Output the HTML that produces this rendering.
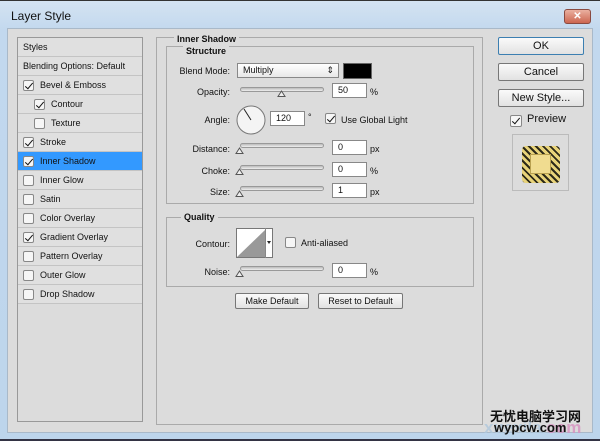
<!DOCTYPE html>
<html><head><meta charset="utf-8"><style>
*{margin:0;padding:0;box-sizing:border-box}
body{width:600px;height:441px;overflow:hidden;font-family:"Liberation Sans",Tahoma,sans-serif;font-size:9px;color:#111;position:relative;background:#bcd5ec}
.a{position:absolute}
.frame{left:0;top:0;width:600px;height:441px;background:linear-gradient(#d4e3f2,#c2d8ee 30px,#bdd5ec);border-top:1px solid #333;border-bottom:2px solid #334}
.content{left:7px;top:28px;width:586px;height:405px;background:#dcdcdc;border:1px solid #a9b9c9}
.title{left:11px;top:9px;font-size:12px;color:#111}
.close{left:564px;top:9px;width:27px;height:15px;background:linear-gradient(#eab0a0,#cc6650);border:1px solid #8a4a40;border-radius:3px;color:#fff;font-size:10px;text-align:center;line-height:13px;font-weight:bold}
.lp{left:17px;top:37px;width:126px;height:385px;border:1px solid #999;background:#dcdcdc}
.row{position:absolute;left:0;width:124px;height:19px;border-bottom:1px solid #c4c4c4;background:#e0e0e0;line-height:18px;padding-left:5px}
.sel{background:#3399ff;color:#111}
.cb{position:absolute;width:11px;height:11px;border:1px solid #888;background:#f6f6f6;border-radius:2px;top:4px}
.cb.c::after{content:"";position:absolute;left:3px;top:0px;width:3px;height:7px;border-right:1.5px solid #111;border-bottom:1.5px solid #111;transform:rotate(40deg)}
.lbl{position:absolute;top:0}
.mp{left:156px;top:37px;width:327px;height:388px;border:1px solid #aaa}
.grp{border:1px solid #aaa;position:absolute}
.gt{position:absolute;background:#dcdcdc;font-weight:bold;padding:0 3px;font-size:9px}
.inp{position:absolute;background:#fff;border:1px solid #888;height:15px;line-height:13px;padding-left:5px}
.sl{position:absolute;height:5px;border:1px solid #999;border-radius:3px;background:linear-gradient(#bbb,#eee)}
.th{position:absolute;width:9px;height:7px;}
.r{position:absolute;text-align:right}
.btn{position:absolute;border:1px solid #777;border-radius:2px;background:linear-gradient(#fafafa,#e2e2e2);text-align:center}
</style></head><body>
<div class="a frame"></div>
<div class="a title">Layer Style</div>
<div class="a close">✕</div>
<div class="a content"></div>

<div class="a lp">
<div class="row" style="top:0">Styles</div>
<div class="row" style="top:19px">Blending Options: Default</div>
<div class="row" style="top:38px"><span class="cb c" style="left:5px"></span><span class="lbl" style="left:22px">Bevel &amp; Emboss</span></div>
<div class="row" style="top:57px"><span class="cb c" style="left:16px"></span><span class="lbl" style="left:33px">Contour</span></div>
<div class="row" style="top:76px"><span class="cb" style="left:16px"></span><span class="lbl" style="left:33px">Texture</span></div>
<div class="row" style="top:95px"><span class="cb c" style="left:5px"></span><span class="lbl" style="left:22px">Stroke</span></div>
<div class="row sel" style="top:114px"><span class="cb c" style="left:5px"></span><span class="lbl" style="left:22px">Inner Shadow</span></div>
<div class="row" style="top:133px"><span class="cb" style="left:5px"></span><span class="lbl" style="left:22px">Inner Glow</span></div>
<div class="row" style="top:152px"><span class="cb" style="left:5px"></span><span class="lbl" style="left:22px">Satin</span></div>
<div class="row" style="top:171px"><span class="cb" style="left:5px"></span><span class="lbl" style="left:22px">Color Overlay</span></div>
<div class="row" style="top:190px"><span class="cb c" style="left:5px"></span><span class="lbl" style="left:22px">Gradient Overlay</span></div>
<div class="row" style="top:209px"><span class="cb" style="left:5px"></span><span class="lbl" style="left:22px">Pattern Overlay</span></div>
<div class="row" style="top:228px"><span class="cb" style="left:5px"></span><span class="lbl" style="left:22px">Outer Glow</span></div>
<div class="row" style="top:247px"><span class="cb" style="left:5px"></span><span class="lbl" style="left:22px">Drop Shadow</span></div>
</div>

<div class="a mp"></div>
<div class="grp" style="left:166px;top:46px;width:308px;height:158px"></div>
<div class="gt" style="left:174px;top:34px">Inner Shadow</div>
<div class="gt" style="left:183px;top:46px">Structure</div>
<div class="r" style="left:170px;width:60px;top:66px">Blend Mode:</div>
<div class="inp" style="left:237px;top:63px;width:102px;background:linear-gradient(#fff,#e8e8e8)">Multiply<span style="position:absolute;right:4px;top:0">⇕</span></div>
<div class="a" style="left:343px;top:63px;width:29px;height:16px;background:#000;border:1px solid #666"></div>

<div class="r" style="left:170px;width:60px;top:87px">Opacity:</div>
<div class="sl" style="left:240px;top:87px;width:84px"></div>
<svg class="th" style="left:277px;top:90px" viewBox="0 0 9 7"><path d="M1 6.5L4.5 1 8 6.5Z" fill="#eee" stroke="#555"/></svg>
<div class="inp" style="left:332px;top:83px;width:35px">50</div><div class="a" style="left:370px;top:87px">%</div>

<div class="r" style="left:170px;width:60px;top:115px">Angle:</div>
<svg class="a" style="left:236px;top:105px" width="30" height="30"><circle cx="15" cy="15" r="14" fill="#f4f4f4" stroke="#777"/><line x1="15" y1="15" x2="8" y2="4" stroke="#222"/></svg>
<div class="inp" style="left:270px;top:111px;width:35px">120</div><div class="a" style="left:308px;top:112px">°</div>
<span class="cb c" style="left:325px;top:113px"></span><div class="a" style="left:341px;top:115px">Use Global Light</div>

<div class="r" style="left:170px;width:60px;top:144px">Distance:</div>
<div class="sl" style="left:240px;top:143px;width:84px"></div>
<svg class="th" style="left:235px;top:147px" viewBox="0 0 9 7"><path d="M1 6.5L4.5 1 8 6.5Z" fill="#eee" stroke="#555"/></svg>
<div class="inp" style="left:332px;top:140px;width:35px">0</div><div class="a" style="left:370px;top:144px">px</div>

<div class="r" style="left:170px;width:60px;top:166px">Choke:</div>
<div class="sl" style="left:240px;top:165px;width:84px"></div>
<svg class="th" style="left:235px;top:168px" viewBox="0 0 9 7"><path d="M1 6.5L4.5 1 8 6.5Z" fill="#eee" stroke="#555"/></svg>
<div class="inp" style="left:332px;top:162px;width:35px">0</div><div class="a" style="left:370px;top:166px">%</div>

<div class="r" style="left:170px;width:60px;top:187px">Size:</div>
<div class="sl" style="left:240px;top:186px;width:84px"></div>
<svg class="th" style="left:235px;top:190px" viewBox="0 0 9 7"><path d="M1 6.5L4.5 1 8 6.5Z" fill="#eee" stroke="#555"/></svg>
<div class="inp" style="left:332px;top:183px;width:35px">1</div><div class="a" style="left:370px;top:187px">px</div>

<div class="grp" style="left:166px;top:217px;width:308px;height:70px"></div>
<div class="gt" style="left:181px;top:212px">Quality</div>
<div class="r" style="left:170px;width:60px;top:239px">Contour:</div>
<svg class="a" style="left:236px;top:228px" width="37" height="30"><rect x="0.5" y="0.5" width="36" height="29" fill="#fff" stroke="#777"/><path d="M1 29L29 2V29Z" fill="#999"/><line x1="29.5" y1="0" x2="29.5" y2="30" stroke="#888"/><path d="M31 13h4l-2 3z" fill="#222"/></svg>
<span class="cb" style="left:285px;top:237px"></span><div class="a" style="left:301px;top:238px">Anti-aliased</div>
<div class="r" style="left:170px;width:60px;top:267px">Noise:</div>
<div class="sl" style="left:240px;top:266px;width:84px"></div>
<svg class="th" style="left:235px;top:270px" viewBox="0 0 9 7"><path d="M1 6.5L4.5 1 8 6.5Z" fill="#eee" stroke="#555"/></svg>
<div class="inp" style="left:332px;top:263px;width:35px">0</div><div class="a" style="left:370px;top:267px">%</div>

<div class="btn" style="left:235px;top:293px;width:74px;height:16px;line-height:14px">Make Default</div>
<div class="btn" style="left:318px;top:293px;width:85px;height:16px;line-height:14px">Reset to Default</div>

<div class="btn" style="left:498px;top:37px;width:86px;height:18px;line-height:16px;font-size:11px;border-color:#3c7fb1">OK</div>
<div class="btn" style="left:498px;top:63px;width:86px;height:18px;line-height:16px;font-size:11px">Cancel</div>
<div class="btn" style="left:498px;top:89px;width:86px;height:18px;line-height:16px;font-size:11px">New Style...</div>
<span class="cb c" style="left:510px;top:115px;width:12px;height:12px"></span><div class="a" style="left:527px;top:113px;font-size:11px">Preview</div>
<div class="a" style="left:512px;top:134px;width:57px;height:57px;border:1px solid #bbb"></div>
<div class="a" style="left:522px;top:146px;width:38px;height:37px;border-radius:4px;background:repeating-linear-gradient(45deg,#2d2a1a 0 2px,#e8d37a 2px 5px)"></div>
<div class="a" style="left:530px;top:154px;width:21px;height:20px;background:#f0dc90;border:1px solid #b8a050"></div>

<div class="a" style="left:484px;top:418px;font-size:17px;font-weight:bold;color:#b0c8dc;opacity:.8">xuexila.<span style="color:#d890c0">com</span></div>
<div class="a" style="left:490px;top:406px;font-family:'Liberation Sans','Noto Sans CJK SC',sans-serif;font-size:13px;font-weight:bold;color:#111">无忧电脑学习网</div>
<div class="a" style="left:494px;top:420px;font-size:13px;font-weight:bold;color:#111">wypcw.com</div>
</body></html>
